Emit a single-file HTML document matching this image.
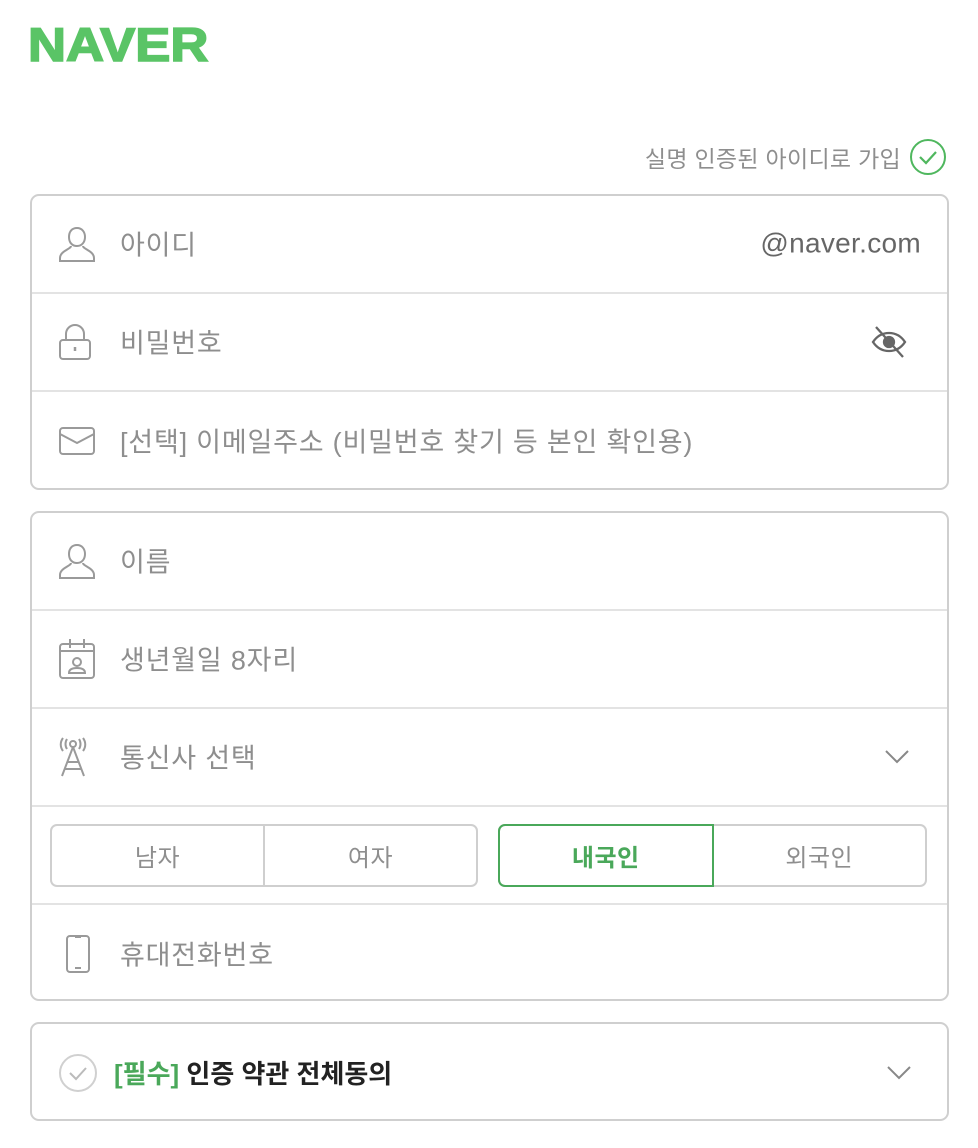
<!DOCTYPE html>
<html><head><meta charset="utf-8"><style>
*{box-sizing:border-box;margin:0;padding:0}
body{width:978px;height:1148px;background:#fff;font-family:"Liberation Sans","Noto Sans CJK KR",sans-serif;position:relative;overflow:hidden;color:#929292}
.logo{position:absolute;left:28px;top:19px;font-size:47px;line-height:52px;font-weight:bold;color:#5ac466;font-family:"Liberation Sans",sans-serif;transform:scaleX(1.12);transform-origin:left;-webkit-text-stroke:1.6px #5ac466}
.real{position:absolute;right:31px;top:138px;font-size:23px;color:#8e8e8e;display:flex;align-items:center;gap:8px;letter-spacing:0.3px}
.box{position:absolute;left:30px;width:919px;border:2px solid #cfcfcf;border-radius:9px}
.row{position:relative;height:98px;border-bottom:2px solid #e3e3e3;display:flex;align-items:center}
.row:last-child{border-bottom:none}
.row .ic{position:absolute;left:26px;top:50%;transform:translateY(-50%)}
.row .t{position:absolute;left:88px;font-size:27px;letter-spacing:0.8px;color:#8e8e8e;top:50%;transform:translateY(-52%);white-space:nowrap}
.seg{position:absolute;top:17px;height:63px;border:2px solid #cfcfcf;border-radius:7px;display:flex;font-size:24px;color:#8e8e8e;letter-spacing:0.5px}
.seg div{flex:1;display:flex;align-items:center;justify-content:center}
</style></head><body>
<div class="logo">NAVER</div>
<div class="real">실명 인증된 아이디로 가입
<svg width="38" height="38" viewBox="0 0 38 38"><circle cx="19" cy="19" r="17" fill="none" stroke="#4fb75e" stroke-width="2"/><path d="M11 19l6 6 10-11" fill="none" stroke="#4fb75e" stroke-width="2.2"/></svg></div>

<div class="box" style="top:194px;height:296px">
 <div class="row"><svg class="ic" width="38" height="38" viewBox="0 0 38 38" fill="none" stroke="#9a9a9a" stroke-width="2"><path d="M19 3c-5 0-8 3.5-8 9s3 9 8 9 8-4 8-9-3-9-8-9z"/><path d="M13 21c0 3-11 5-11 12v3h34v-3c0-7-11-9-11-12"/></svg><span class="t">아이디</span><span style="position:absolute;right:26px;font-size:28px;color:#666;top:50%;transform:translateY(-52%);letter-spacing:0.3px">@naver.com</span></div>
 <div class="row"><svg class="ic" width="34" height="38" viewBox="0 0 34 38" fill="none" stroke="#9a9a9a" stroke-width="2"><path d="M8 17v-6a9 9 0 0118 0v6"/><rect x="2" y="17" width="30" height="19" rx="3"/><path d="M17 24v4" stroke-width="2.5"/></svg><span class="t">비밀번호</span>
 <svg style="position:absolute;right:40px;top:50%;transform:translateY(-50%)" width="36" height="34" viewBox="0 0 36 34" fill="none" stroke="#666" stroke-width="2.3"><path d="M2 17c4-6 9-9 16-9s12 3 16 9c-4 6-9 9-16 9S6 23 2 17z"/><circle cx="18" cy="17" r="5" fill="#666"/><path d="M5 2l27 30"/></svg></div>
 <div class="row"><svg class="ic" width="38" height="30" viewBox="0 0 38 30" fill="none" stroke="#9a9a9a" stroke-width="2"><rect x="2" y="2" width="34" height="26" rx="3"/><path d="M2 8l17 9 17-9"/></svg><span class="t">[선택] 이메일주소 (비밀번호 찾기 등 본인 확인용)</span></div>
</div>

<div class="box" style="top:511px;height:490px">
 <div class="row"><svg class="ic" width="38" height="38" viewBox="0 0 38 38" fill="none" stroke="#9a9a9a" stroke-width="2"><path d="M19 3c-5 0-8 3.5-8 9s3 9 8 9 8-4 8-9-3-9-8-9z"/><path d="M13 21c0 3-11 5-11 12v3h34v-3c0-7-11-9-11-12"/></svg><span class="t">이름</span></div>
 <div class="row"><svg class="ic" width="38" height="42" viewBox="0 0 38 42" fill="none" stroke="#9a9a9a" stroke-width="2"><rect x="2" y="6" width="34" height="34" rx="3"/><path d="M2 13h34M12 1v9M26 1v9"/><circle cx="19" cy="24" r="4"/><path d="M11 35c0-4 4-5 8-5s8 1 8 5z"/></svg><span class="t">생년월일 8자리</span></div>
 <div class="row"><svg class="ic" width="30" height="40" viewBox="0 0 30 40" fill="none" stroke="#9a9a9a" stroke-width="2"><circle cx="15" cy="7" r="3"/><path d="M9 2c-2 3-2 7 0 10M21 2c2 3 2 7 0 10M5 1c-3 4-3 9 0 13M25 1c3 4 3 9 0 13"/><path d="M15 10L4 39M15 10l11 29M9 25h12M6 32h18"/></svg><span class="t">통신사 선택</span>
 <svg style="position:absolute;right:38px;top:50%;transform:translateY(-50%)" width="24" height="14" viewBox="0 0 24 14" fill="none" stroke="#888" stroke-width="2"><path d="M1 1l11 11L23 1"/></svg></div>
 <div class="row">
  <div class="seg" style="left:18px;width:428px"><div style="border-right:2px solid #cfcfcf">남자</div><div>여자</div></div>
  <div class="seg" style="left:466px;width:429px"><div style="border:2px solid #4aa85a;margin:-2px 0 -2px -2px;border-radius:7px 0 0 7px;color:#4aa85a;font-weight:bold">내국인</div><div>외국인</div></div>
 </div>
 <div class="row"><svg class="ic" style="left:33px" width="26" height="40" viewBox="0 0 26 40" fill="none" stroke="#9a9a9a" stroke-width="2"><rect x="2" y="2" width="22" height="36" rx="3"/><path d="M10 3h6M10 34h6"/></svg><span class="t">휴대전화번호</span></div>
</div>

<div class="box" style="top:1022px;height:99px">
 <div class="row"><svg class="ic" width="40" height="40" viewBox="0 0 40 40" fill="none" stroke="#d0d0d0" stroke-width="2"><circle cx="20" cy="20" r="18"/><path d="M12 20l6 6 10-11" stroke="#bbb"/></svg>
 <span class="t" style="left:82px;font-weight:bold;color:#222;font-size:26px;letter-spacing:0"><span style="color:#4aa85a">[필수]</span> 인증 약관 전체동의</span>
 <svg style="position:absolute;right:36px;top:50%;transform:translateY(-50%)" width="24" height="14" viewBox="0 0 24 14" fill="none" stroke="#888" stroke-width="2"><path d="M1 1l11 11L23 1"/></svg></div>
</div>
</body></html>
